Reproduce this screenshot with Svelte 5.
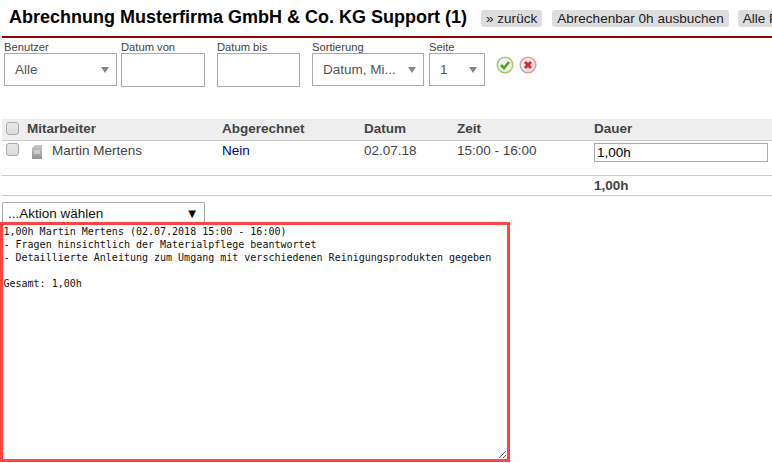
<script>
  const rows = [{ name: 'Martin Mertens', billed: 'Nein', date: '02.07.18', time: '15:00 - 16:00', dur: '1,00h' }];
  const text = `1,00h Martin Mertens (02.07.2018 15:00 - 16:00)
- Fragen hinsichtlich der Materialpflege beantwortet
- Detaillierte Anleitung zum Umgang mit verschiedenen Reinigungsprodukten gegeben

Gesamt: 1,00h`;
</script>

<div class="page">
  <header class="head">
    <h1>Abrechnung Musterfirma GmbH &amp; Co. KG Support (1)</h1>
    <a class="btn first">» zurück</a>
    <a class="btn second">Abrechenbar 0h ausbuchen</a>
    <a class="btn third">Alle Positionen</a>
  </header>

  <div class="filters">
    <label class="f benutzer"><span>Benutzer</span><div class="sel"><select><option>Alle</option></select></div></label>
    <label class="f von"><span>Datum von</span><input class="date" /></label>
    <label class="f bis"><span>Datum bis</span><input class="date" /></label>
    <label class="f sort"><span>Sortierung</span><div class="sel"><select><option>Datum, Mi...</option></select></div></label>
    <label class="f seite"><span>Seite</span><div class="sel"><select><option>1</option></select></div></label>
    <div class="icons">
      <svg width="18" height="18" viewBox="0 0 18 18">
        <defs><radialGradient id="g" cx="50%" cy="40%" r="60%"><stop offset="0" stop-color="#fff"/><stop offset="1" stop-color="#e0e6d6"/></radialGradient></defs>
        <circle cx="9" cy="9" r="7.8" fill="url(#g)" stroke="#a8c870" stroke-width="1.5"/>
        <path d="M5 9l3 3 5-6" fill="none" stroke="#5c9a1e" stroke-width="2.6"/>
      </svg>
      <svg width="18" height="18" viewBox="0 0 18 18">
        <circle cx="9" cy="9" r="7.8" fill="#f3ecec" stroke="#e39a9a" stroke-width="1.5"/>
        <path d="M6 6l6 6M12 6l-6 6" fill="none" stroke="#e0202c" stroke-width="2.8"/>
      </svg>
    </div>
  </div>

  <table>
    <colgroup><col class="c1"/><col class="c2"/><col class="c3"/><col class="c4"/><col class="c5"/><col/></colgroup>
    <thead>
      <tr><th><span class="cb"></span></th><th>Mitarbeiter</th><th>Abgerechnet</th><th>Datum</th><th>Zeit</th><th>Dauer</th></tr>
    </thead>
    <tbody>
      {#each rows as r}
        <tr>
          <td><span class="cb"></span></td>
          <td><span class="who">
            <svg width="12" height="14" viewBox="0 0 12 14">
              <defs><linearGradient id="d" x1="0" y1="0" x2="0" y2="1"><stop offset="0" stop-color="#c8c8c8"/><stop offset="1" stop-color="#949494"/></linearGradient></defs>
              <path d="M4 0h7v14H1V3z" fill="url(#d)"/><path d="M3 6h6M3 8h6" stroke="#e8e8e8"/>
            </svg>{r.name}</span></td>
          <td class="nein">{r.billed}</td>
          <td>{r.date}</td>
          <td>{r.time}</td>
          <td><input class="dur" value={r.dur} /></td>
        </tr>
      {/each}
    </tbody>
    <tfoot>
      <tr><td colspan="5"></td><td>1,00h</td></tr>
    </tfoot>
  </table>

  <div class="action"><span>...Aktion wählen</span><span class="arrow">▼</span></div>
  <textarea readonly value={text}></textarea>
</div>

<style>
  :global(body) { margin: 0; overflow: hidden; background: #fff; }
  .page { width: 772px; height: 463px; overflow: hidden; font-family: "Liberation Sans", Arial, sans-serif; color: #444; }
  .head { display: flex; align-items: center; height: 36px; margin-left: 2px; padding-left: 7px; border-bottom: 2px solid #990000; white-space: nowrap; overflow: hidden; }
  h1 { margin: 0 0 2px; font-size: 18px; font-weight: bold; color: #000; line-height: 34px; flex: none; }
  .btn { flex: none; background: #ddd; color: #222; border-radius: 3px; font-size: 13.55px; line-height: 17px; height: 17px; padding: 0 5px; }
  .first { margin-left: 14px; }
  .second { margin-left: 10px; }
  .third { margin-left: 9px; }
  .filters { display: flex; align-items: flex-start; padding: 4px 0 0 4px; height: 79px; box-sizing: border-box; }
  .f { display: flex; flex-direction: column; flex: none; }
  .f span { font-size: 11.2px; line-height: 11px; color: #444; height: 11px; }
  .benutzer { width: 113px; margin-right: 4px; }
  .von { width: 84px; margin-right: 12px; }
  .bis { width: 83px; margin-right: 12px; }
  .sort { width: 112px; margin-right: 5px; }
  .seite { width: 56px; margin-right: 11px; }
  .sel { position: relative; height: 33px; box-sizing: border-box; border: 1px solid #aaa; }
  .sel::after { content: ""; position: absolute; right: 7px; top: 13px; border-style: solid; border-color: #888 transparent transparent; border-width: 6px 4.5px 0; }
  select { appearance: none; border: 0; background: none; width: 100%; height: 100%; padding: 0 0 0 10px; font: 13.5px "Liberation Sans", Arial, sans-serif; color: #555; outline: none; }
  .date { box-sizing: border-box; height: 34px; width: 100%; border: 1px solid #aaa; background: #fff; padding: 0; }
  .icons { display: flex; gap: 5px; margin-top: 14px; }
  table { width: 770px; margin: 2px 0 0 2px; border-collapse: collapse; table-layout: fixed; font-size: 13.5px; }
  .c1 { width: 25px; } .c2 { width: 195px; } .c3 { width: 142px; } .c4 { width: 93px; } .c5 { width: 137px; }
  th { background: #eee; text-align: left; padding: 0 0 2px; height: 19px; font-weight: bold; color: #444; border-bottom: 1px solid #ccc; }
  tbody td { padding: 2px 0 0; height: 32px; vertical-align: top; border-bottom: 1px solid #ccc; line-height: 15px; box-sizing: content-box; }
  tfoot td { padding: 0 0 1px; height: 18px; font-weight: bold; border-bottom: 1px solid #ccc; }
  .cb { display: block; box-sizing: border-box; width: 13px; height: 13px; margin-left: 4px; border: 1px solid #aaa; border-radius: 3px; background: linear-gradient(#e8e8e8, #dcdcdc); }
  .who { display: flex; align-items: flex-start; gap: 9px; margin-left: 4px; color: #444; }
  .who svg { margin-top: 2px; flex: none; }
  .nein { color: #000080; }
  .dur { box-sizing: border-box; display: block; width: 174px; height: 19px; border: 1px solid #aaa; padding: 0 2px; font: 13.5px "Liberation Sans", Arial, sans-serif; color: #000; outline: none; }
  .action { box-sizing: border-box; display: flex; justify-content: space-between; align-items: center; width: 203px; height: 20px; margin: 6px 0 0 2px; padding: 2px 8px 0 5px; border: 1px solid #aaa; border-bottom: 0; border-radius: 2px 2px 0 0; font-size: 13.5px; color: #111; }
  .arrow { font-size: 10px; font-family: "DejaVu Sans", sans-serif; color: #000; }
  textarea { display: block; box-sizing: border-box; width: 510px; height: 240px; margin: 0; border: 3px solid #f44; padding: 0 0.5px; font: 10px/13px "DejaVu Sans Mono", monospace; color: #111; outline: none; background: #fff; }
</style>
